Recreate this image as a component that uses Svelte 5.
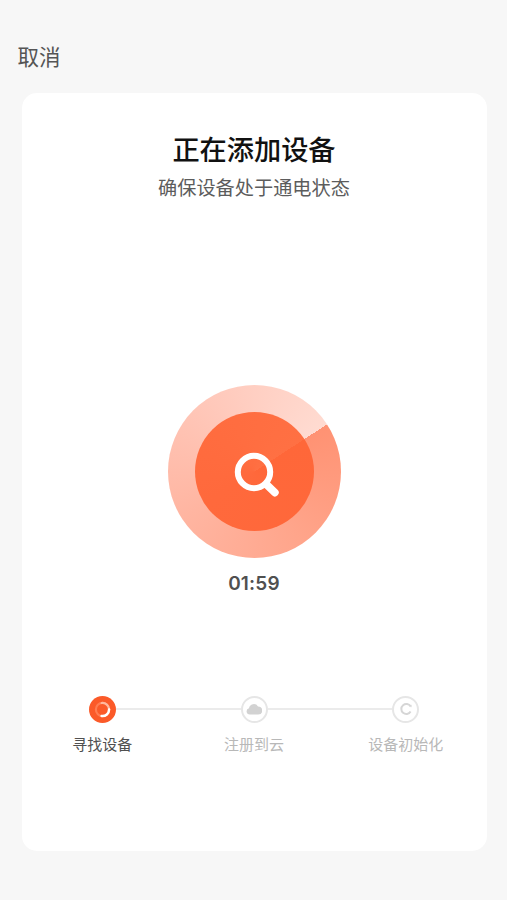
<script>
  let remaining = $state(119);
  let activeStep = $state(0);

  const steps = [
    { icon: 'search', label: '寻找设备' },
    { icon: 'cloud', label: '注册到云' },
    { icon: 'init', label: '设备初始化' }
  ];

  const pad = (n) => String(n).padStart(2, '0');
  let time = $derived(`${pad(Math.floor(remaining / 60))}:${pad(remaining % 60)}`);
</script>

<div class="page">
  <header class="topbar">
    <button class="cancel">取消</button>
  </header>

  <main class="card">
    <h1>正在添加设备</h1>
    <p class="hint">确保设备处于通电状态</p>

    <div class="radar">
      <div class="core">
        <svg width="56" height="56" viewBox="-4 -4 56 56" fill="none" stroke="#fff" stroke-linecap="round">
          <circle cx="24" cy="24" r="16.2" stroke-width="6" />
          <path d="M36.5 36.5l8.3 8" stroke-width="7.8" />
        </svg>
      </div>
    </div>

    <div class="timer">{time}</div>

    <div class="steps">
      {#each steps as step, i}
        <div class="step" class:active={i === activeStep}>
          <div class="dot">
            {#if step.icon === 'search'}
              <svg width="27" height="27" viewBox="0 0 27 27" fill="none" stroke-linecap="round">
                <circle cx="13.5" cy="13.5" r="6.6" stroke="#ff7d52" stroke-width="2.2" />
                <path d="M12.6 7A6.6 6.6 0 0 1 20.1 13.5" stroke="#ffb89e" stroke-width="2.2" />
                <path d="M20.1 13.5A6.6 6.6 0 0 1 12.6 20" stroke="#fff" stroke-width="2.5" />
              </svg>
            {:else if step.icon === 'cloud'}
              <svg width="16" height="14" viewBox="0 0 16 14" fill="#d2d2d2">
                <path d="M3.8 12.6a3.2 3.2 0 0 1-.8-6.3A4.9 4.9 0 0 1 12 4.4a4.1 4.1 0 0 1 .2 8.2z" />
              </svg>
            {:else}
              <svg width="14" height="14" viewBox="0 0 14 14" fill="none" stroke="#d6d6d6" stroke-width="2">
                <path d="M11.6 4.4A5 5 0 1 0 11.6 9.6" />
                <path d="M12 2.8v2.4" stroke-width="1" />
              </svg>
            {/if}
          </div>
          <span class="label">{step.label}</span>
        </div>
      {/each}
    </div>
  </main>
</div>

<style>
  :global(body) {
    margin: 0;
    background: #f7f7f7;
  }

  .page {
    box-sizing: border-box;
    width: 100%;
    height: 900px;
    padding: 41px 20px 49px 22px;
    display: flex;
    flex-direction: column;
    font-family: Inter, "Noto Sans CJK SC", sans-serif;
  }

  .topbar {
    height: 52px;
    margin-left: -4.5px;
  }

  .cancel {
    display: block;
    padding: 0;
    border: none;
    background: none;
    font-family: inherit;
    font-size: 21.5px;
    line-height: 32px;
    color: #555;
    cursor: pointer;
  }

  .card {
    flex: 1;
    display: flex;
    flex-direction: column;
    align-items: center;
    padding-right: 1px;
    background: #fff;
    border-radius: 15px;
  }

  h1 {
    margin: 38px 0 0;
    font-size: 27.2px;
    line-height: 40px;
    font-weight: 500;
    color: #111;
  }

  .hint {
    margin: 3px 0 0;
    font-size: 19.2px;
    line-height: 28px;
    color: #5c5c5c;
  }

  .radar {
    width: 173px;
    height: 173px;
    margin-top: 183px;
    border-radius: 50%;
    display: flex;
    align-items: center;
    justify-content: center;
    background: conic-gradient(from 57deg, #ff9273, #ffa58b 90deg, #ffb5a1 180deg, #ffc8ba 270deg, #ffdbd1);
  }

  .core {
    width: 119px;
    height: 119px;
    border-radius: 50%;
    display: flex;
    align-items: center;
    justify-content: center;
    background: conic-gradient(from 57deg, #ff6739, #ff693c 180deg, #ff7043);
  }

  .timer {
    margin-top: 12px;
    font-size: 19px;
    line-height: 28px;
    font-weight: 600;
    letter-spacing: 0.2px;
    color: #505050;
  }

  .steps {
    width: 455px;
    margin-top: 97.5px;
    display: flex;
  }

  .step {
    flex: 1;
    position: relative;
    display: flex;
    flex-direction: column;
    align-items: center;
  }

  .dot {
    box-sizing: border-box;
    width: 27px;
    height: 27px;
    border: 2px solid #e6e6e6;
    border-radius: 50%;
    display: flex;
    align-items: center;
    justify-content: center;
  }

  .active .dot {
    border: none;
    background: #fb5a29;
  }

  /* connector between neighbouring dots */
  .step + .step::before {
    content: '';
    position: absolute;
    top: 12px;
    right: calc(50% + 13.5px);
    width: calc(100% - 27px);
    height: 2px;
    background: #ebebeb;
  }

  .label {
    margin-top: 11.5px;
    font-size: 15px;
    line-height: 22px;
    color: #b8b8b8;
  }

  .active .label {
    color: #505050;
  }
</style>
